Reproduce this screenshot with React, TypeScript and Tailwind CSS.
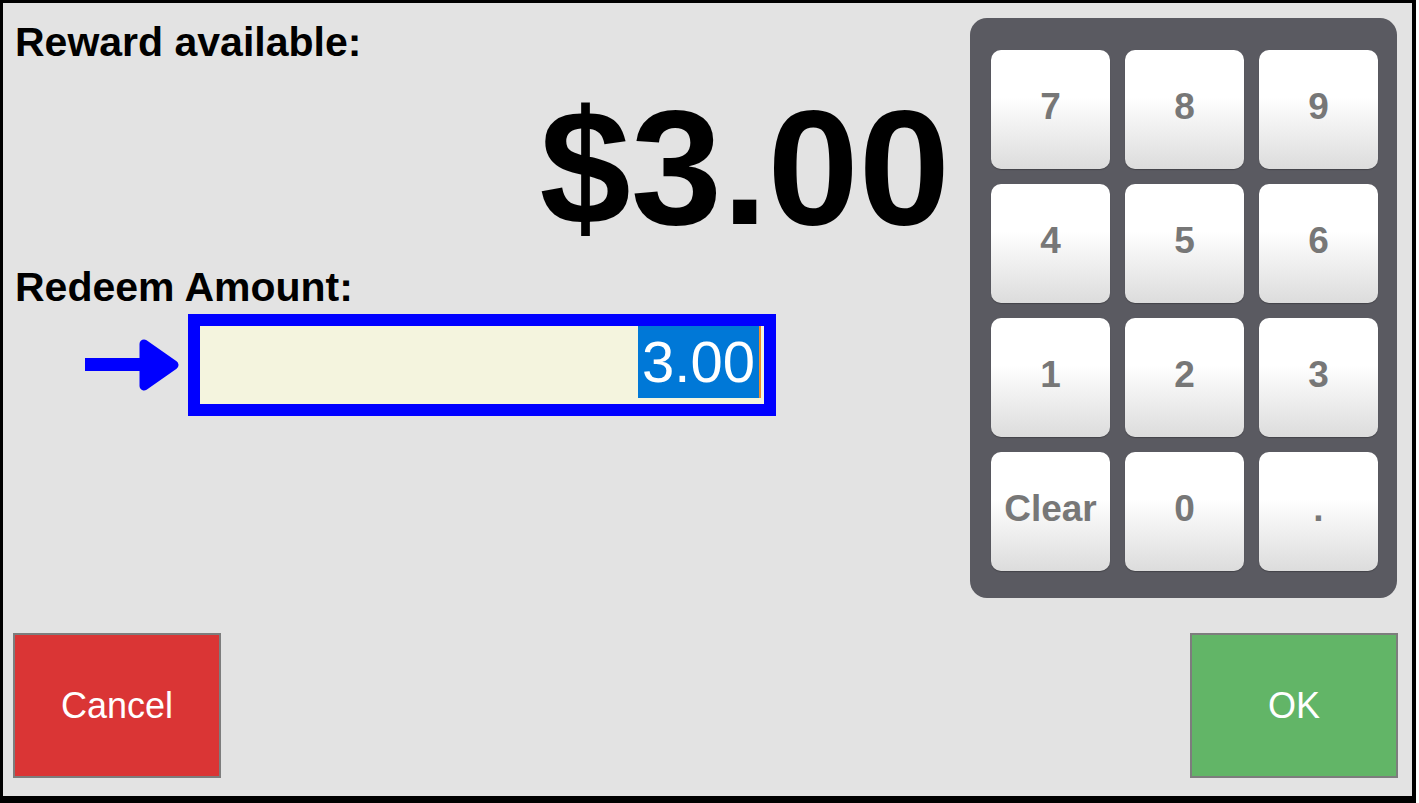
const KEYS = ['7', '8', '9', '4', '5', '6', '1', '2', '3', 'Clear', '0', '.']

function Arrow() {
    return (
        <svg width="95" height="52" viewBox="0 0 95 52" className="shrink-0">
            <rect x="0" y="19" width="60" height="13" fill="#0000ff" />
            <polygon
                points="59,5 89,26 59,47"
                fill="#0000ff"
                stroke="#0000ff"
                strokeWidth="9"
                strokeLinejoin="round"
            />
        </svg>
    )
}

function Key({ label }: { label: string }) {
    return (
        <button className="flex h-[119px] w-[119px] items-center justify-center rounded-[10px] bg-[linear-gradient(to_bottom,#ffffff_40%,#dcdcdc)] pb-[6px] text-[37px] font-bold leading-none text-[#777777] shadow-[0_1px_1px_rgba(0,0,0,0.25)]">
            {label}
        </button>
    )
}

export default function App() {
    return (
        <div className="h-[803px] w-[1419px] bg-white font-['Liberation_Sans',Arial,sans-serif]">
            <div className="flex h-[803px] w-[1416px] flex-col border-b-[7px] border-l-[3px] border-r-[4px] border-t-[3px] border-black bg-[#e3e3e3]">
                <div className="flex">
                    <div className="flex flex-1 flex-col">
                        <div className="ml-[12px] mt-[19px] text-[41px] font-bold leading-[41px] text-black">
                            Reward available:
                        </div>
                        <div className="mt-[23px] pr-[20px] text-right text-[164px] font-bold leading-none text-black">
                            $3.00
                        </div>
                        <div className="ml-[12px] mt-[17px] text-[41px] font-bold leading-[41px] text-black">
                            Redeem Amount:
                        </div>
                        <div className="mt-[6px] flex items-center">
                            <div className="ml-[82px]">
                                <Arrow />
                            </div>
                            <div className="ml-[8px] flex h-[102px] w-[588px] items-start justify-end border-[12px] border-[#0000ff] bg-[#f4f4de] pr-[3px]">
                                <span className="h-[72px] bg-[#0078d7] px-[4px] text-[58px] leading-[72px] text-white">
                                    3.00
                                </span>
                                <span className="h-[72px] w-[2px] bg-[#f08c2c]" />
                            </div>
                        </div>
                    </div>
                    <div className="mr-[15px] mt-[15px] h-[580px] w-[427px] rounded-[17px] bg-[#5a5a61] pb-[27px] pl-[21px] pr-[19px] pt-[32px]">
                        <div className="grid grid-cols-3 gap-[15px]">
                            {KEYS.map((k) => (
                                <Key key={k} label={k} />
                            ))}
                        </div>
                    </div>
                </div>
                <div className="mt-[35px] flex justify-between pl-[10px] pr-[14px]">
                    <button className="flex h-[145px] w-[208px] items-center justify-center border-2 border-[#7d7d7d] bg-[#da3535] text-[36px] text-white">
                        Cancel
                    </button>
                    <button className="flex h-[145px] w-[208px] items-center justify-center border-2 border-[#7d7d7d] bg-[#62b567] text-[36px] text-white">
                        OK
                    </button>
                </div>
            </div>
        </div>
    )
}
